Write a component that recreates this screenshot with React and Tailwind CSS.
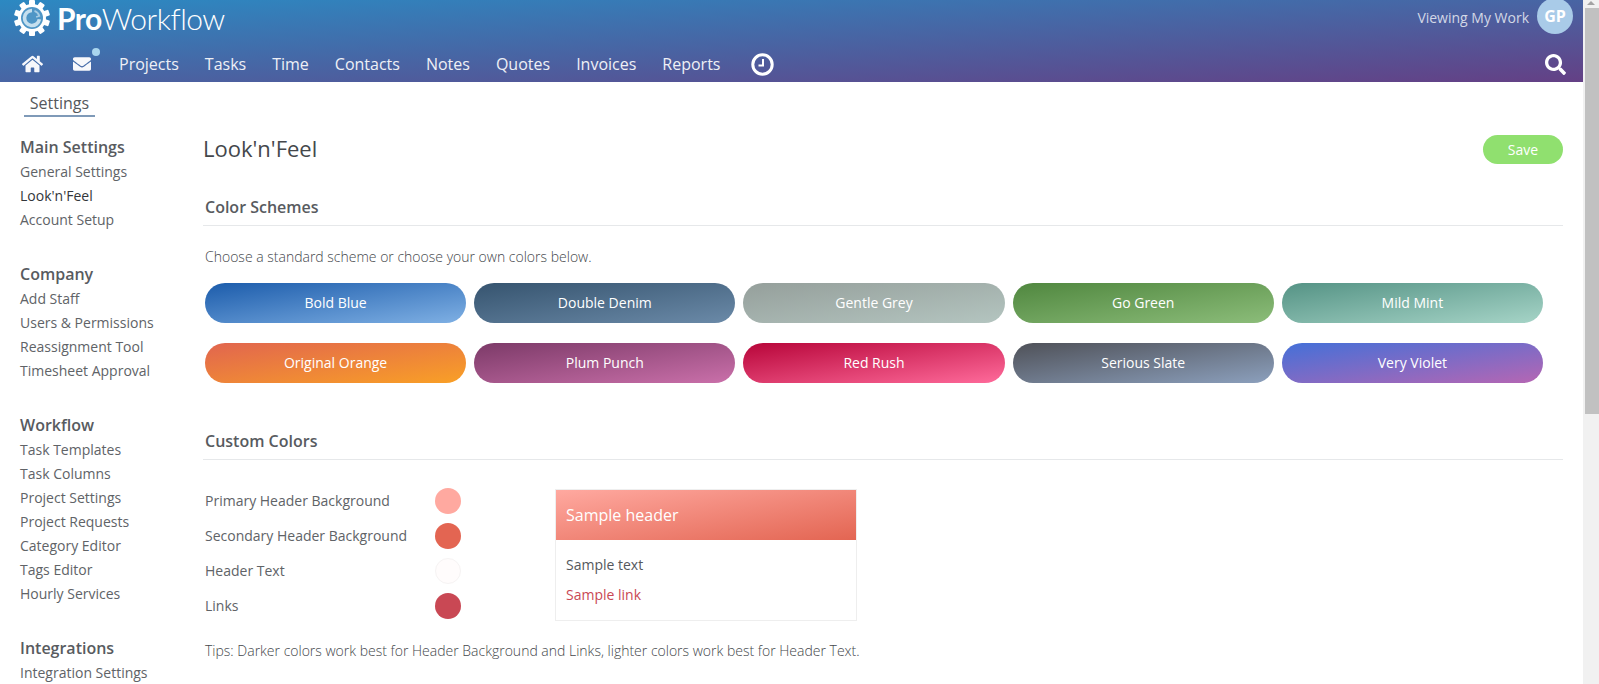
import { FaHome, FaEnvelope, FaSearch } from "react-icons/fa";

const navItems = ["Projects", "Tasks", "Time", "Contacts", "Notes", "Quotes", "Invoices", "Reports"];

const sidebar = [
  { title: "Main Settings", items: ["General Settings", "Look'n'Feel", "Account Setup"] },
  { title: "Company", items: ["Add Staff", "Users & Permissions", "Reassignment Tool", "Timesheet Approval"] },
  {
    title: "Workflow",
    items: ["Task Templates", "Task Columns", "Project Settings", "Project Requests", "Category Editor", "Tags Editor", "Hourly Services"],
  },
  { title: "Integrations", items: ["Integration Settings"] },
];

const schemes = [
  { name: "Bold Blue", className: "from-[#1c5cab] to-[#7fb0e4]" },
  { name: "Double Denim", className: "from-[#36546f] to-[#6b8aa8]" },
  { name: "Gentle Grey", className: "from-[#959f9b] to-[#b4c5c0]" },
  { name: "Go Green", className: "from-[#50873f] to-[#8cbd7a]" },
  { name: "Mild Mint", className: "from-[#559385] to-[#a6d4c7]" },
  { name: "Original Orange", className: "from-[#e1654f] to-[#f9a026]" },
  { name: "Plum Punch", className: "from-[#7c3a68] to-[#ca70aa]" },
  { name: "Red Rush", className: "from-[#b70539] to-[#ff6b9b]" },
  { name: "Serious Slate", className: "from-[#4f5158] to-[#8ca0bd]" },
  { name: "Very Violet", className: "from-[#4470d8] to-[#b666b3]" },
];

const customColors = [
  { label: "Primary Header Background", className: "bg-[#ffa9a0]" },
  { label: "Secondary Header Background", className: "bg-[#e36552]" },
  { label: "Header Text", className: "bg-[#fffcfc] border border-[#f6f3f3]" },
  { label: "Links", className: "bg-[#c94854]" },
];

function Logo() {
  const teeth = [0, 36, 72, 108, 144, 180, 216, 252, 288, 324];
  return (
    <div className="flex items-center gap-[7px]">
      <svg width="36" height="36" viewBox="0 0 36 36">
        {teeth.map((a) => (
          <rect key={a} x="15" y="0" width="6" height="7" rx="1" fill="#fff" transform={`rotate(${a} 18 18)`} />
        ))}
        <circle cx="18" cy="18" r="14" fill="#fff" />
        <circle cx="18" cy="18" r="11" fill="#4f96c6" />
        <path d="M18 10.5a7.5 7.5 0 1 0 7.4 8.8" fill="none" stroke="#c5dfee" strokeWidth="3.6" />
        <path d="M20.5 10.8a7.5 7.5 0 0 1 4.8 5.2l-3.2 1" fill="none" stroke="#a5cbe3" strokeWidth="1.8" />
      </svg>
      <span className="font-['Lato',sans-serif] text-[30px] leading-[36px] tracking-[-0.5px] text-white">
        <span className="font-bold">Pro</span>
        <span className="font-light">Workflow</span>
      </span>
    </div>
  );
}

function Header() {
  return (
    <header className="h-[82px] shrink-0 bg-linear-to-br/srgb from-[#2c89c2] to-[#644085] text-white">
      <div className="flex h-[46px] items-start justify-between pl-[14px] pr-[10px]">
        <Logo />
        <div className="flex items-start gap-[8px]">
          <span className="pt-[8px] text-[14px] leading-[20px] text-[#d3d8e6]">Viewing My Work</span>
          <div className="mt-[-2px] flex h-[36px] w-[36px] items-center justify-center rounded-full bg-[#a9cbe8] text-[16px] font-bold">
            GP
          </div>
        </div>
      </div>
      <nav className="flex h-[36px] items-center pl-[22px] pr-[17px]">
        <FaHome className="h-[20px] w-[21px] text-[#f7f8fb]" />
        <div className="relative ml-[29px] mr-[27px]">
          <FaEnvelope className="h-[18px] w-[20px] text-[#f7f8fb]" />
          <span className="absolute right-[-8px] top-[-7px] h-[8px] w-[8px] rounded-full bg-[#a9d6ee]" />
        </div>
        <ul className="flex gap-[26px] text-[16px] leading-[24px] text-[#eef0f6]">
          {navItems.map((item) => (
            <li key={item}>{item}</li>
          ))}
        </ul>
        <svg width="23" height="23" viewBox="0 0 23 23" className="ml-[31px]">
          <circle cx="11.5" cy="11.5" r="9.7" fill="none" stroke="#fff" strokeWidth="3" />
          <path d="M12 6v6.5H7.5" fill="none" stroke="#fff" strokeWidth="2" />
        </svg>
        <FaSearch className="ml-auto h-[21px] w-[21px] text-white" />
      </nav>
    </header>
  );
}

function Sidebar() {
  return (
    <aside className="w-[203px] shrink-0 pl-[20px] pt-[53px]">
      {sidebar.map((group) => (
        <div key={group.title} className="mb-[30px]">
          <h3 className="text-[16px] font-semibold leading-[25px] text-[#585b5f]">{group.title}</h3>
          <ul className="text-[14px] leading-[24px] text-[#606367]">
            {group.items.map((item) => (
              <li key={item} className={item === "Look'n'Feel" ? "text-[#33363a]" : ""}>
                {item}
              </li>
            ))}
          </ul>
        </div>
      ))}
    </aside>
  );
}

function Content() {
  return (
    <main className="w-[1360px] shrink-0 pt-[51px]">
      <div className="flex items-start justify-between">
        <h1 className="text-[22px] leading-[30px] text-[#44474b]">Look'n'Feel</h1>
        <button className="mt-[2px] h-[29px] w-[80px] rounded-full bg-[#90e06f] text-[14px] text-white">Save</button>
      </div>

      <h2 className="mt-[31px] border-b border-[#e6e8ea] pb-[6px] pl-[2px] text-[16px] font-semibold leading-[24px] text-[#585b5f]">
        Color Schemes
      </h2>
      <p className="mt-[20px] pl-[2px] text-[14px] font-light leading-[22px] text-[#44474b]">
        Choose a standard scheme or choose your own colors below.
      </p>
      <div className="mt-[15px] grid w-[1340px] grid-cols-5 gap-x-[8px] gap-y-[20px] pl-[2px]">
        {schemes.map((s) => (
          <button
            key={s.name}
            className={`h-[40px] rounded-full bg-linear-to-br/srgb pb-[2px] text-[14px] font-medium text-white ${s.className}`}
          >
            {s.name}
          </button>
        ))}
      </div>

      <h2 className="mt-[46px] border-b border-[#e6e8ea] pb-[6px] pl-[2px] text-[16px] font-semibold leading-[24px] text-[#585b5f]">
        Custom Colors
      </h2>
      <div className="mt-[29px] flex pl-[2px]">
        <div className="mt-[-6px] w-[350px]">
          {customColors.map((c) => (
            <div key={c.label} className="flex h-[35px] w-[256px] items-center justify-between">
              <span className="text-[14px] leading-[20px] text-[#606367]">{c.label}</span>
              <span className={`h-[26px] w-[26px] rounded-full ${c.className}`} />
            </div>
          ))}
        </div>
        <div className="h-[132px] w-[302px] border border-[#eeeeee]">
          <div className="flex h-[50px] items-center bg-linear-to-br/srgb from-[#ffa9a0] to-[#e36552] px-[10px] text-[16px] text-white">
            Sample header
          </div>
          <p className="mt-[15px] px-[10px] text-[14px] leading-[20px] text-[#55585c]">Sample text</p>
          <a className="mt-[10px] block px-[10px] text-[14px] leading-[20px] text-[#c94854]">Sample link</a>
        </div>
      </div>
      <p className="mt-[18px] pl-[2px] text-[14px] font-light leading-[20px] text-[#44474b]">
        Tips: Darker colors work best for Header Background and Links, lighter colors work best for Header Text.
      </p>
    </main>
  );
}

function Scrollbar() {
  return (
    <div className="flex w-[16px] shrink-0 flex-col bg-[#f1f1f1]">
      <div className="flex h-[8px] items-start justify-center pt-[1px]">
        <div className="h-0 w-0 border-x-[4px] border-b-[4px] border-x-transparent border-b-[#a3a3a3]" />
      </div>
      <div className="ml-[2px] h-[406px] w-[14px] bg-[#c1c1c1]" />
    </div>
  );
}

export default function App() {
  return (
    <div className="flex h-screen overflow-hidden bg-white font-['Open_Sans',sans-serif]">
      <div className="flex min-w-0 flex-1 flex-col">
        <Header />
        <div className="relative flex-1 overflow-hidden">
          <div className="absolute left-[24px] top-[9px] w-[71px] border-b-2 border-[#7f9ab8] text-center text-[16px] leading-[24px] text-[#55585c]">
            Settings
          </div>
          <div className="flex">
            <Sidebar />
            <Content />
          </div>
        </div>
      </div>
      <Scrollbar />
    </div>
  );
}
